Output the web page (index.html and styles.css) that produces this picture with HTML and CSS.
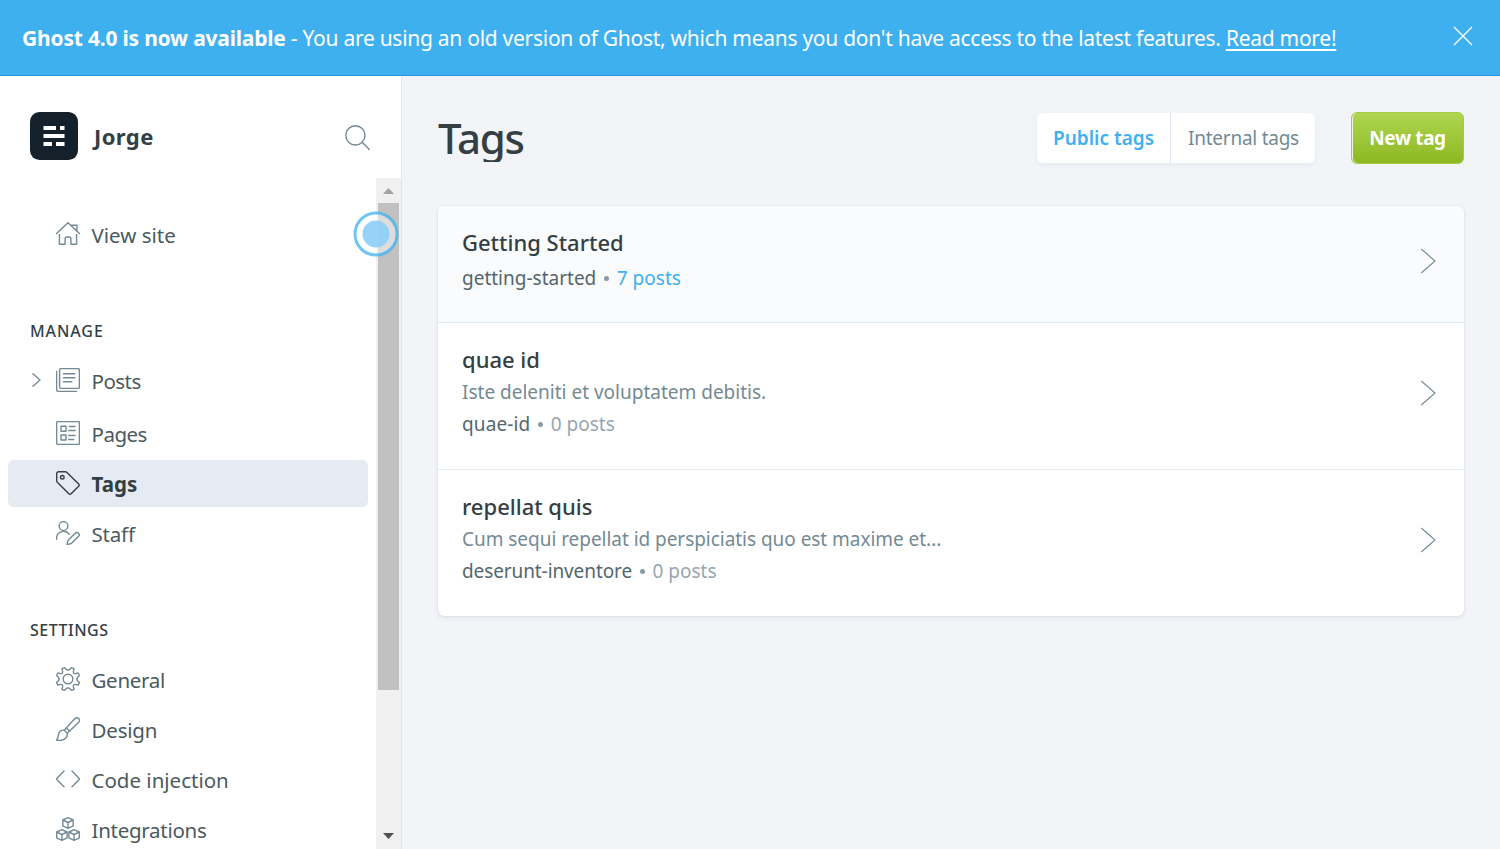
FILE: index.html
```html
<!DOCTYPE html>
<html lang="en">
<head>
<meta charset="utf-8">
<title>Tags - Jorge</title>
<link rel="stylesheet" href="styles.css">
</head>
<body>
<div class="banner">
  <p class="banner-text"><strong>Ghost 4.0 is now available</strong><span class="banner-body"> - You are using an old version of Ghost, which means you don't have access to the latest features. </span><a class="banner-link">Read more!</a></p>
  <svg class="banner-close" viewBox="0 0 20 20"><path d="M1 1l18 18M19 1L1 19"/></svg>
</div>
<div class="app">
  <aside class="sidebar">
    <header class="site">
      <svg class="logo" viewBox="0 0 48 48"><rect width="48" height="48" rx="9.5" fill="#15212a"/><path fill="#fff" d="M13.500 14h12.500v4h-12.500zM30 14h4.500v4h-4.500zM13.500 22h21v4h-21zM13.500 30h8.500v4h-8.500zM26 30h8.500v4h-8.500z"/></svg>
      <span class="site-name">Jorge</span>
      <svg class="icon search" viewBox="0 0 25 25"><circle cx="10.400" cy="10.400" r="9.600"/><path d="M17.200 17.200l7.200 7.200"/></svg>
    </header>
    <div class="scroller">
      <nav class="nav">
        <a class="item view-site"><svg class="icon" viewBox="0 0 24 24"><path d="M.6 11.500L12 .7l11.400 10.800M3.400 12.500v9.800h5.700v-5.700a1.600 1.600 0 0 1 1.600-1.600h2.600a1.600 1.600 0 0 1 1.600 1.600v5.700h5.700v-9.800M15.500 3.200h5.400v5.500"/></svg><span class="t-view">View site</span></a>
        <h2 class="group manage">Manage</h2>
        <a class="item posts"><svg class="icon caret" viewBox="0 0 9 14"><path d="M1 .7l7 6.300-7 6.300"/></svg><svg class="icon" viewBox="0 0 24 24"><rect x="3.600" y=".6" width="19.800" height="19.800" rx="1.400"/><path d="M.6 3.500v18.400a1.500 1.500 0 0 0 1.500 1.500h18.400M7.500 5.700h11.300M7.500 9.700h11.300M7.500 13.800h8.300"/></svg><span class="t-posts">Posts</span></a>
        <a class="item"><svg class="icon" viewBox="0 0 24 24"><rect x=".6" y=".6" width="22.800" height="22.800" rx="1.200"/><path d="M5 5.200h5v5H5zM5 14h5v5H5zM13.500 5.500h5.600M12.700 9.500h6.400M12.700 14.500h6.400M12.700 18.500h5"/></svg><span class="t-pages">Pages</span></a>
        <a class="item active"><svg class="icon" viewBox="0 0 24 24"><path d="M.7 2.700a2 2 0 0 1 2-2h6.700a2 2 0 0 1 1.300.5l12 11.700a1.600 1.600 0 0 1 0 2.300l-7.600 7.600a1.600 1.600 0 0 1-2.300 0L1.300 11.300a2 2 0 0 1-.6-1.400z"/><circle cx="6.300" cy="6.300" r="1.800"/></svg><span class="t-tags">Tags</span></a>
        <a class="item"><svg class="icon" viewBox="0 0 24 24"><circle cx="7.500" cy="5" r="4.400"/><path d="M.6 18.300v-1a6.900 6.900 0 0 1 12.600-3.900M19.600 11.900a2.300 2.300 0 0 1 3.200 3.200l-7.500 7.400-4.300 1.100 1.100-4.300z"/></svg><span class="t-staff">Staff</span></a>
        <h2 class="group settings">Settings</h2>
        <a class="item"><svg class="icon" viewBox="0 0 24 24"><defs><path id="gear-quarter" d="M12 3.100Q13.800 3.100 14.900 1.200Q15.300.5 15.900.8L17.600 1.500Q18.200 1.800 18 2.400L17.400 4.100Q17 7 19.900 6.600L21.600 6Q22.200 5.800 22.500 6.400L23.200 8.100Q23.500 8.700 22.800 9.100Q20.900 10.200 20.900 12"/></defs><circle cx="12" cy="12" r="4.800"/><use href="#gear-quarter"/><use href="#gear-quarter" transform="rotate(90 12 12)"/><use href="#gear-quarter" transform="rotate(180 12 12)"/><use href="#gear-quarter" transform="rotate(270 12 12)"/></svg><span class="t-general">General</span></a>
        <a class="item"><svg class="icon" viewBox="0 0 24 24"><path d="M8.200 13.200L19 1.600a2.600 2.600 0 0 1 3.700 3.700L11.300 16.200zM10.300 10.900l3.100 3.100M8.200 13.200c-3.300-.3-5.300 1.500-5.700 4.700-.2 2-.8 3.800-1.900 5.300 3.100.5 6.900.1 9-1.900 1.500-1.500 1.900-3.200 1.700-5.100z"/></svg><span class="t-design">Design</span></a>
        <a class="item"><svg class="icon" viewBox="0 0 24 24"><path d="M8 4L.8 11.500a.8.800 0 0 0 0 1L8 19.800M16 4l7.200 7.500a.8.800 0 0 1 0 1L16 19.800"/></svg><span class="t-code">Code injection</span></a>
        <a class="item"><svg class="icon" viewBox="0 0 24 24"><path d="M12 .7l5.200 2.300v5.800L12 11.300 6.800 8.800V3zM6.800 3L12 5.500 17.200 3M12 5.500v5.800M5.900 12.700l5.200 2.300v5.800l-5.200 2.500-5.200-2.500V15zM.7 15l5.200 2.500 5.200-2.500M5.900 17.500v5.800M18.100 12.700l5.200 2.300v5.800l-5.200 2.500-5.200-2.500V15zM12.900 15l5.200 2.500 5.200-2.500M18.100 17.500v5.800"/></svg><span class="t-integrations">Integrations</span></a>
      </nav>
      <div class="scrollbar">
        <svg class="arrow" viewBox="0 0 11 6"><path fill="#a3a3a3" d="M5.500 0L11 6H0z"/></svg>
        <div class="thumb"></div>
        <svg class="arrow" viewBox="0 0 11 6"><path fill="#505050" d="M0 0h11L5.500 6z"/></svg>
      </div>
      <svg class="beacon" viewBox="0 0 46 46"><circle cx="23" cy="23" r="21" fill="#fff" fill-opacity=".45" stroke="#3eb0ef" stroke-opacity=".75" stroke-width="3"/><circle cx="23" cy="23" r="13.500" fill="#8fd0f7" fill-opacity=".93"/></svg>
    </div>
  </aside>
  <main class="main">
    <header class="head">
      <h1 class="title">Tags</h1>
      <div class="tabs"><span class="tab tab-public">Public tags</span><span class="tab tab-internal">Internal tags</span></div>
      <a class="new"><span>New tag</span></a>
    </header>
    <section class="list">
      <article class="row first">
        <div><h3 class="n-getting">Getting Started</h3><p class="meta"><span class="s-getting">getting-started</span><i></i><span class="count linked">7 posts</span></p></div>
        <svg class="chev" viewBox="0 0 16 26"><path d="M1.300 1L15 13 1.300 25"/></svg>
      </article>
      <article class="row">
        <div><h3 class="n-quae">quae id</h3><p class="desc d-iste">Iste deleniti et voluptatem debitis.</p><p class="meta"><span class="s-quae">quae-id</span><i></i><span class="count">0 posts</span></p></div>
        <svg class="chev" viewBox="0 0 16 26"><path d="M1.300 1L15 13 1.300 25"/></svg>
      </article>
      <article class="row">
        <div><h3 class="n-repellat">repellat quis</h3><p class="desc d-cum">Cum sequi repellat id perspiciatis quo est maxime et...</p><p class="meta"><span class="s-deserunt">deserunt-inventore</span><i></i><span class="count">0 posts</span></p></div>
        <svg class="chev" viewBox="0 0 16 26"><path d="M1.300 1L15 13 1.300 25"/></svg>
      </article>
    </section>
  </main>
</div>
</body>
</html>
```

FILE: styles.css
```css
* { box-sizing: border-box; }
html, body { height: 100%; }
body { margin: 0; overflow: hidden; display: flex; flex-direction: column; font-family: "Noto Sans", "Open Sans", sans-serif; color: #343f44; background: #f2f4f8; }
h1, h2, h3, p { margin: 0; font-weight: 400; }
svg { display: block; flex: none; fill: none; }

.banner { flex: none; height: 76px; display: flex; align-items: center; justify-content: space-between; padding: 0 27px 0 22px; background: #3eb0ef; border-bottom: 1px solid #2594dc; color: #fff; }
.banner-text { font-size: 21px; line-height: 30px; white-space: pre; letter-spacing: -.275px; }
.banner-text strong { font-weight: 700; letter-spacing: -.2px; }
.banner-link { text-decoration: underline; text-decoration-thickness: 2px; text-underline-offset: 3px; text-decoration-skip-ink: none; }
.banner-close { width: 20px; height: 20px; stroke: #fff; stroke-width: 1.300; margin-top: -4px; }

.app { flex: 1; min-height: 0; display: flex; }
.sidebar { width: 402px; flex: none; display: flex; flex-direction: column; background: #fff; border-right: 1px solid #e3e7ee; }
.site { height: 102px; flex: none; display: flex; align-items: flex-start; padding: 36px 32px 0 30px; }
.logo { width: 48px; height: 48px; }
.site-name { margin: 9px 0 0 16px; font-size: 22px; font-weight: 700; line-height: 30px; letter-spacing: .4px; }
.icon { width: 24px; height: 24px; stroke: #738a94; stroke-width: 1.400; stroke-linecap: round; stroke-linejoin: round; }
.search { width: 25px; height: 25px; margin: 13px -1px 0 auto; }

.scroller { position: relative; flex: 1; min-height: 0; display: flex; }
.nav { flex: 1; min-width: 0; overflow: hidden; display: flex; flex-direction: column; gap: 3px; padding: 33px 8px 0; }
.item { height: 47px; flex: none; display: flex; align-items: center; padding-left: 48px; border-radius: 6px; font-size: 20.5px; color: #4b5a61; white-space: nowrap; }
.item .icon { margin-top: -1px; }
.item span { margin-left: 11.5px; padding-top: 1px; line-height: 30px; }
.t-posts, .t-pages { letter-spacing: -.5px; }
.t-general { letter-spacing: -.3px; }
.t-design, .t-staff { letter-spacing: -.2px; }
.t-integrations { letter-spacing: -.28px; }
.group { flex: none; height: 22px; line-height: 22px; padding-left: 22px; font-size: 16px; font-weight: 500; text-transform: uppercase; }
.manage { margin: 59px 0 12px; letter-spacing: .9px; }
.settings { margin: 59px 0 12px; letter-spacing: .5px; }
.posts { padding-left: 24px; margin-bottom: 3px; }
.posts .caret { width: 9px; height: 14px; margin-right: 15px; }
.active { background: #e5eaf3; color: #343f44; font-weight: 700; }
.active .icon { stroke: #343f44; }
.scrollbar { width: 25px; flex: none; display: flex; flex-direction: column; align-items: center; background: #f0f0f0; padding: 10px 0; }
.arrow { width: 11px; height: 6px; }
.thumb { width: 21px; height: 487px; margin: 9px 0 auto; background: #c1c1c1; }
.beacon { position: absolute; left: 352.500px; top: 33px; width: 46px; height: 46px; }

.main { flex: 1; padding: 36px 36px 0; }
.head { height: 52px; display: flex; align-items: center; }
.title { align-self: flex-start; height: 50px; line-height: 52px; font-size: 42px; font-weight: 500; letter-spacing: -1.3px; padding-right: 2px; overflow: hidden; }
.tabs { display: flex; height: 50px; margin-left: auto; background: #fff; border-radius: 6px; box-shadow: 0 2px 4px rgba(40, 60, 90, .06); }
.tab { display: flex; align-items: center; justify-content: center; font-size: 19px; color: #738a94; white-space: nowrap; }
.tab-public { width: 134px; border-right: 1px solid #dfe8f0; color: #3eb0ef; font-weight: 600; }
.tab-internal { width: 144px; padding-left: 1px; letter-spacing: -.25px; }
.new { width: 113px; height: 52px; margin-left: 36px; display: flex; align-items: center; justify-content: center; border-radius: 6px; border: 1px solid #a5cb45; background: linear-gradient(#afd650, #8db823); box-shadow: inset 1px 0 #eef6dc; color: #fff; font-size: 19px; font-weight: 700; letter-spacing: -.4px; white-space: nowrap; }
.list { margin-top: 42px; border-radius: 6px; overflow: hidden; background: #fff; box-shadow: 0 0 1px rgba(30, 50, 80, .25), 0 2px 5px rgba(30, 50, 80, .08); }
.row { height: 147px; display: flex; justify-content: space-between; align-items: center; padding: 0 28px 0 24px; border-top: 1px solid #e3ecf3; }
.row > div { align-self: flex-start; padding-top: 20px; }
.first { height: 116px; border-top: 0; background: #fafbfc; }
.row h3 { font-size: 22px; line-height: 33px; font-weight: 500; margin-top: -.5px; margin-bottom: .5px; }
.desc, .meta { font-size: 19px; line-height: 32px; color: #738a94; }
.d-cum { letter-spacing: -.04px; }
.meta { display: flex; align-items: center; color: #54666d; white-space: nowrap; }
.first .meta { margin-top: 3px; }
.meta i { width: 5px; height: 5px; border-radius: 50%; background: #8a9ba3; margin: 1px 8px 0 7.5px; }
.s-quae { letter-spacing: .1px; }
.s-deserunt { letter-spacing: -.1px; }
.count { color: #96a5ae; }
.linked { color: #3eb0ef; }
.chev { width: 16px; height: 26px; margin-top: -6px; stroke: #738a94; stroke-width: 1.100; }
```
